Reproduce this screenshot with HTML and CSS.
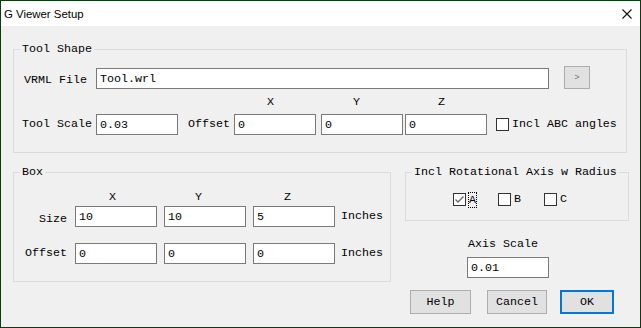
FILE: index.html
```html
<!DOCTYPE html>
<html lang="en">
<head>
    <meta charset="UTF-8">
    <meta name="viewport" content="width=device-width, initial-scale=1.0">
    <title>G Viewer Setup</title>
    <link rel="stylesheet" href="styles.css">
</head>
<body>
    <div class="window">
        <div class="titlebar">
            <span class="title">G Viewer Setup</span>
            <svg class="close" width="10" height="10" viewBox="0 0 10 10">
                <path d="M0.5 0.5L9.5 9.5M9.5 0.5L0.5 9.5" stroke="#111" stroke-width="1.1" fill="none"/>
            </svg>
        </div>
        <div class="client">
            <fieldset class="group tool-shape">
                <legend>Tool Shape</legend>
                <div class="file-row">
                    <label class="lbl vrml">VRML File</label>
                    <input type="text" class="field file" value="Tool.wrl">
                    <button class="browse">&gt;</button>
                </div>
                <div class="axis-head tool-axes">
                    <span class="axis">X</span>
                    <span class="axis">Y</span>
                    <span class="axis">Z</span>
                </div>
                <div class="row scale-row">
                    <label class="lbl scale">Tool Scale</label>
                    <input type="text" class="field" value="0.03">
                    <label class="lbl offset">Offset</label>
                    <input type="text" class="field" value="0">
                    <input type="text" class="field off-y" value="0">
                    <input type="text" class="field off-z" value="0">
                    <span class="check abc"></span>
                    <span class="check-text">Incl ABC angles</span>
                </div>
            </fieldset>

            <div class="lower">
                <fieldset class="group box">
                    <legend>Box</legend>
                    <div class="axis-head box-axes">
                        <span class="axis">X</span>
                        <span class="axis">Y</span>
                        <span class="axis">Z</span>
                    </div>
                    <div class="row size-row">
                        <label class="lbl side-lbl size">Size</label>
                        <input type="text" class="field" value="10">
                        <input type="text" class="field next" value="10">
                        <input type="text" class="field next" value="5">
                        <span class="unit">Inches</span>
                    </div>
                    <div class="row box-offset-row">
                        <label class="lbl side-lbl">Offset</label>
                        <input type="text" class="field" value="0">
                        <input type="text" class="field next" value="0">
                        <input type="text" class="field next" value="0">
                        <span class="unit">Inches</span>
                    </div>
                </fieldset>

                <div class="side">
                    <fieldset class="group rot">
                        <legend>Incl Rotational Axis w Radius</legend>
                        <div class="rot-row">
                            <span class="check">
                                <svg width="11" height="11" viewBox="0 0 11 11">
                                    <path d="M1.5 5.5L4 8L9.5 2.5" stroke="#666" stroke-width="1.3" fill="none"/>
                                </svg>
                            </span>
                            <span class="rot-lbl focus">A</span>
                            <span class="check b"></span>
                            <span class="rot-lbl">B</span>
                            <span class="check c"></span>
                            <span class="rot-lbl">C</span>
                        </div>
                    </fieldset>
                    <div class="axis-scale">
                        <label class="lbl">Axis Scale</label>
                        <input type="text" class="field" value="0.01">
                    </div>
                    <div class="buttons">
                        <button class="btn help">Help</button>
                        <button class="btn cancel">Cancel</button>
                        <button class="btn ok">OK</button>
                    </div>
                </div>
            </div>
        </div>
    </div>
</body>
</html>
```

FILE: styles.css
```css
body {
    margin: 0;
    background: #0b3b0b;
    font-family: "Courier New", "Liberation Mono", monospace;
    font-size: 11.67px;
    color: #000;
}
.window {
    width: 641px;
    height: 328px;
    box-sizing: border-box;
    border: 1px solid #0b3b0b;
    background: #f0f0f0;
}
.titlebar {
    height: 25px;
    background: #fff;
    display: flex;
    align-items: center;
    justify-content: space-between;
    padding-left: 3px;
}
.titlebar .title {
    font-family: "Segoe UI", "Liberation Sans", sans-serif;
    font-size: 11.4px;
    color: #000;
}
.titlebar .close {
    margin-right: 8px;
    display: block;
}
.client {
    padding: 17px 0 0 12px;
}
.group {
    margin: 0;
    padding: 0;
    border: 1px solid #dcdcdc;
    box-sizing: border-box;
    min-width: 0;
}
.group legend {
    margin-left: 6px;
    padding: 0 2px;
    line-height: 13px;
}
.lbl {
    line-height: 13px;
    white-space: nowrap;
}
.field {
    display: block;
    width: 82px;
    height: 21px;
    box-sizing: border-box;
    border: 1px solid #7a7a7a;
    padding: 0 3px;
    margin: 0;
    background: #fff;
    font-family: inherit;
    font-size: inherit;
    color: #000;
    outline: 0;
}
.row {
    display: flex;
    align-items: center;
    height: 21px;
}
.check {
    display: flex;
    align-items: center;
    justify-content: center;
    width: 13px;
    height: 13px;
    box-sizing: border-box;
    border: 1px solid #333;
    background: #fff;
    flex-shrink: 0;
}
.check svg {
    display: block;
}

/* tool shape */
.tool-shape {
    width: 614px;
    height: 110px;
}
.file-row {
    display: flex;
    align-items: flex-end;
    margin-top: 10px;
    height: 23px;
}
.file-row .vrml {
    margin-left: 10px;
    width: 72px;
    margin-bottom: 2px;
}
.field.file {
    width: 453px;
}
.browse {
    margin-left: 15px;
    width: 26px;
    height: 23px;
    padding: 0;
    background: #e1e1e1;
    border: 1px solid #adadad;
    color: #7a7a7a;
    font-family: inherit;
    font-size: 9px;
}
.axis-head {
    display: flex;
    height: 13px;
    line-height: 13px;
}
.axis {
    width: 7px;
}
.tool-axes {
    margin-top: 7px;
}
.tool-axes .axis:nth-child(1) { margin-left: 253px; }
.tool-axes .axis:nth-child(2) { margin-left: 79px; }
.tool-axes .axis:nth-child(3) { margin-left: 78px; }
.scale-row {
    margin-top: 5px;
    padding-left: 8px;
}
.scale-row .scale {
    margin-right: 4px;
}
.scale-row .offset {
    margin-left: 10px;
    margin-right: 4px;
}
.scale-row .off-y {
    margin-left: 5px;
}
.scale-row .off-z {
    margin-left: 2px;
}
.scale-row .abc {
    margin-left: 9px;
}
.check-text {
    margin-left: 3px;
    line-height: 13px;
}

/* lower part */
.lower {
    display: flex;
    margin-top: 13px;
}
.box {
    width: 378px;
    height: 116px;
}
.box-axes {
    margin-top: 12px;
}
.box-axes .axis:nth-child(1) { margin-left: 95px; }
.box-axes .axis:nth-child(2) { margin-left: 79px; }
.box-axes .axis:nth-child(3) { margin-left: 82px; }
.size-row {
    margin-top: 2px;
}
.box-offset-row {
    margin-top: 16px;
}
.side-lbl {
    width: 53px;
    text-align: right;
    margin-right: 8px;
}
.side-lbl.size {
    margin-top: 6px;
}
.field.next {
    margin-left: 7px;
}
.unit {
    margin-left: 6px;
    line-height: 13px;
}

.side {
    margin-left: 14px;
    width: 224px;
}
.rot {
    width: 224px;
    height: 55px;
}
.rot-row {
    display: flex;
    align-items: center;
    margin-top: 14px;
    padding-left: 47px;
    height: 13px;
}
.rot-lbl {
    margin-left: 3px;
    line-height: 13px;
}
.rot-lbl.focus {
    margin-left: 2px;
    border: 1px dotted #000;
    line-height: 14px;
}
.check.b {
    margin-left: 21px;
}
.check.c {
    margin-left: 23px;
}
.axis-scale {
    display: flex;
    flex-direction: column;
    align-items: flex-start;
    margin-top: 17px;
    padding-left: 62px;
}
.axis-scale .lbl {
    margin-left: 1px;
}
.axis-scale .field {
    margin-top: 6px;
}
.buttons {
    display: flex;
    margin-top: 12px;
    padding-left: 5px;
}
.btn {
    height: 24px;
    padding: 0;
    background: #e1e1e1;
    border: 1px solid #adadad;
    font-family: inherit;
    font-size: inherit;
    color: #000;
}
.btn.help {
    width: 61px;
}
.btn.cancel {
    width: 60px;
    margin-left: 16px;
}
.btn.ok {
    width: 54px;
    margin-left: 13px;
    border: 2px solid #0078d7;
}
```
